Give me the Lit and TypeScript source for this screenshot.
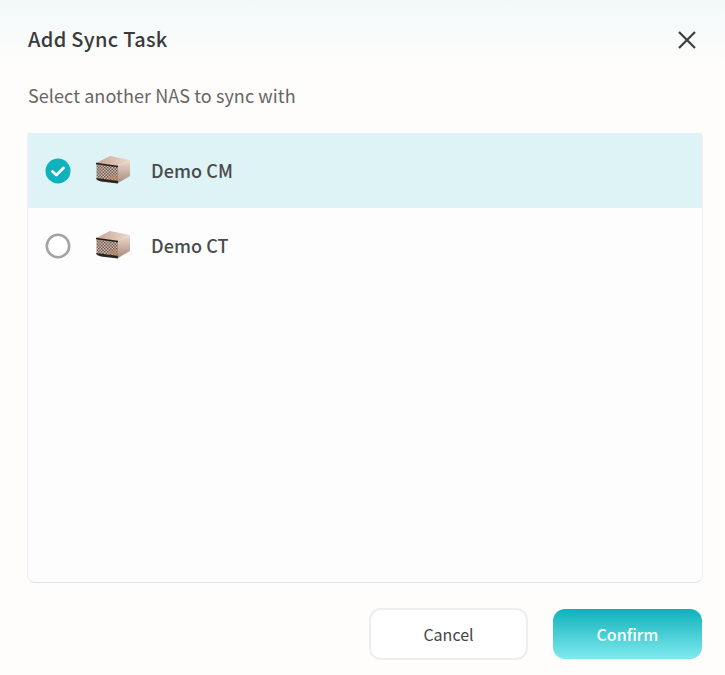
import { LitElement, html, css } from "lit";
import { customElement } from "lit/decorators.js";

const nas = (id: string) => html`<svg class="nas" width="36" height="32" viewBox="0 0 36 32">
  <defs>
    <pattern id="${id}" width="3" height="3" patternUnits="userSpaceOnUse">
      <rect width="3" height="3" fill="#d8c2b5"/><rect width="1.5" height="1.5" fill="#66544c"/><rect x="1.5" y="1.5" width="1.5" height="1.5" fill="#66544c"/>
    </pattern>
    <linearGradient id="${id}t" x1="0" y1="0" x2="1" y2="0"><stop offset="0" stop-color="#c8a594"/><stop offset="1" stop-color="#ecd8cb"/></linearGradient>
    <linearGradient id="${id}s" x1="0" y1="0" x2="0" y2="1"><stop offset="0" stop-color="#efdccf"/><stop offset="1" stop-color="#a98a7c"/></linearGradient>
  </defs>
  <path d="M1 8 L15 1 L35 5 L23 11 Z" fill="url(#${id}t)"/>
  <path d="M23 11 L35 5 L35 21 L23 28 Z" fill="url(#${id}s)"/>
  <path d="M1.5 8.5 L23 11.5 L23 26 L1.5 23.5 Z" fill="url(#${id})"/>
  <path d="M1 8.5 L23 11.5" stroke="#221b19" stroke-width="1.4" fill="none"/>
  <path d="M1 23 L23 25.7 L23 28.5 L6 26.5 L2 25 Z" fill="#2b2421"/>
  <path d="M13 24 L16 19 L18 21 L20.5 17 L22.5 25 Z" fill="#b58a63" opacity=".8"/>
</svg>`;

@customElement("app-root")
export class AppRoot extends LitElement {
  static styles = css`
    :host {
      display: flex;
      flex-direction: column;
      width: 725px;
      height: 675px;
      background: #fffdfb;
      font-family: "Noto Sans CJK SC", "Noto Sans", sans-serif;
      overflow: hidden;
    }
    .head {
      height: 72px;
      flex: none;
      display: flex;
      align-items: center;
      justify-content: space-between;
      padding: 7px 28px 0 28px;
      box-sizing: border-box;
      background: linear-gradient(#f3f9fa, #f5fafa 30%, #fffdfb);
    }
    .title {
      font-size: 20px;
      font-weight: 500;
      color: #3a3a3a;
      letter-spacing: 0.3px;
      line-height: 28px;
      margin-top: -1px;
    }
    .close { display: block; }
    .sub {
      margin: 10px 28px 0;
      height: 30px;
      font-size: 18px;
      line-height: 26px;
      color: #666;
      letter-spacing: 0.08px;
    }
    .list {
      margin: 21px 22px 0 27px;
      height: 450px;
      flex: none;
      box-sizing: border-box;
      background: #fdfdfd;
      border-left: 1px solid #f0f0f0;
      border-right: 1px solid #f0f0f0;
      border-bottom: 1px solid #e2e2e2;
      border-radius: 4px 4px 8px 8px;
    }
    .row {
      height: 75px;
      display: flex;
      align-items: center;
      padding-left: 17px;
    }
    .row.sel { background: #ddf3f5; }
    .radio { width: 26px; height: 26px; display: block; flex: none; }
    .nas { margin: 1px 0 0 24px; flex: none; }
    .name {
      margin-left: 20px;
      padding-bottom: 2px;
      font-size: 18px;
      font-weight: 500;
      color: #4a4a4a;
      letter-spacing: 0.07px;
    }
    .foot {
      display: flex;
      justify-content: flex-end;
      align-items: center;
      gap: 25px;
      padding: 25px 23px 0 0;
    }
    .btn {
      box-sizing: border-box;
      height: 52px;
      border-radius: 12px;
      font-family: inherit;
      font-size: 16px;
      letter-spacing: 0;
      padding: 0;
      display: flex;
      align-items: center;
      justify-content: center;
    }
    .cancel {
      width: 159px;
      background: #fff;
      border: 2px solid #eeeeee;
      color: #444;
    }
    .confirm {
      width: 149px;
      height: 50px;
      border: none;
      font-weight: 500;
      color: #fff;
      background: linear-gradient(#0fb1bb, #7feaee);
    }
  `;

  render() {
    return html`
      <div class="head">
        <div class="title">Add Sync Task</div>
        <svg class="close" width="20" height="20" viewBox="0 0 20 20">
          <path d="M2 2 L18 18 M18 2 L2 18" stroke="#3d3d3d" stroke-width="2.2" fill="none"/>
        </svg>
      </div>
      <div class="sub">Select another NAS to sync with</div>
      <div class="list">
        <div class="row sel">
          <svg class="radio" viewBox="0 0 26 26">
            <circle cx="13" cy="13" r="12.5" fill="#0db2bc"/>
            <path d="M7.5 13.5 L11.3 17 L18.5 10" stroke="#fff" stroke-width="2.8" fill="none" stroke-linecap="round" stroke-linejoin="round"/>
          </svg>
          ${nas("a")}
          <div class="name">Demo CM</div>
        </div>
        <div class="row">
          <svg class="radio" viewBox="0 0 26 26">
            <circle cx="13" cy="13" r="11.2" fill="#fff" stroke="#a3a3a3" stroke-width="2.6"/>
          </svg>
          ${nas("b")}
          <div class="name">Demo CT</div>
        </div>
      </div>
      <div class="foot">
        <button class="btn cancel">Cancel</button>
        <button class="btn confirm">Confirm</button>
      </div>
    `;
  }
}
